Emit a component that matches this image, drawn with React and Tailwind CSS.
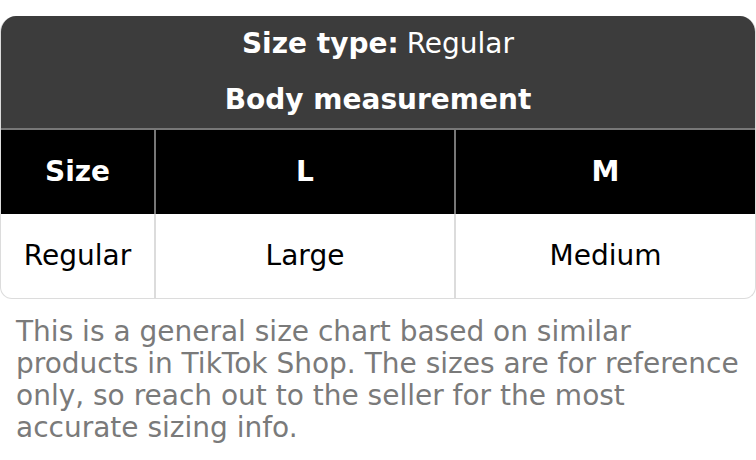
export default function App() {
  const cols = ['L', 'M'];
  const values = ['Large', 'Medium'];

  return (
    <div className="w-[756px] h-[460px] bg-white pt-4 font-['DejaVu_Sans',sans-serif]">
      <div className="overflow-hidden rounded-t-[16px] rounded-b-[12px] border border-t-0 border-[#dcdcdc]">
        {/* Title */}
        <div className="bg-[#3c3c3c] text-white text-[28px] text-center">
          <div className="h-[56px] flex items-center justify-center">
            <span className="font-bold">Size type:</span>
            <span className="ml-2">Regular</span>
          </div>
          <div className="h-[56px] flex items-center justify-center font-bold">
            Body measurement
          </div>
        </div>

        {/* Table */}
        <div className="grid grid-cols-[153px_300px_1fr] border-t-2 border-[#777]">
          <div className="h-[84px] bg-black text-white font-bold text-[28px] flex items-center justify-center">
            Size
          </div>
          {cols.map(c => (
            <div
              key={c}
              className="h-[84px] bg-black text-white font-bold text-[28px] flex items-center justify-center border-l-2 border-[#777]"
            >
              {c}
            </div>
          ))}
          <div className="h-[84px] text-black text-[28px] flex items-center justify-center">
            Regular
          </div>
          {values.map(v => (
            <div
              key={v}
              className="h-[84px] text-black text-[28px] flex items-center justify-center border-l-2 border-[#dcdcdc]"
            >
              {v}
            </div>
          ))}
        </div>
      </div>

      <p className="px-4 pt-[17px] text-[28px] leading-[32px] text-[#7a7a7a]">
        This is a general size chart based on similar products in TikTok Shop. The sizes are for reference only, so reach out to the seller for the most accurate sizing info.
      </p>
    </div>
  );
}
